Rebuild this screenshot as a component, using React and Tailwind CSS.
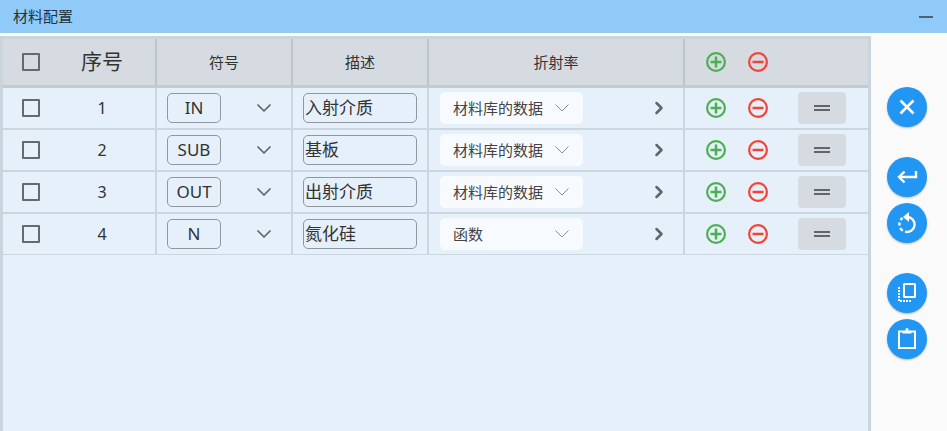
import { ChevronDown, ChevronRight } from 'lucide-react'

const sans = 'font-["Noto_Sans","Noto_Sans_CJK_SC",sans-serif]'

const rows = [
  { id: 1, sym: 'IN', desc: '入射介质', rate: '材料库的数据' },
  { id: 2, sym: 'SUB', desc: '基板', rate: '材料库的数据' },
  { id: 3, sym: 'OUT', desc: '出射介质', rate: '材料库的数据' },
  { id: 4, sym: 'N', desc: '氮化硅', rate: '函数', last: true },
]

function Check() {
  return <div className="w-[18px] h-[18px] shrink-0 border-2 border-[#666a6d] rounded-[1px]" />
}

function AddBtn() {
  return (
    <svg width="20" height="20" viewBox="0 0 20 20" fill="none" stroke="#4caf50" strokeWidth="2.2">
      <circle cx="10" cy="10" r="8.900" />
      <path d="M10 4.500v11M4.500 10h11" strokeWidth="2.500" />
    </svg>
  )
}

function DelBtn() {
  return (
    <svg width="20" height="20" viewBox="0 0 20 20" fill="none" stroke="#f44336" strokeWidth="2.2">
      <circle cx="10" cy="10" r="8.900" />
      <path d="M4.500 10h11" strokeWidth="2.500" />
    </svg>
  )
}

function Fab({ children, className = '' }) {
  return (
    <div className={'w-10 h-10 rounded-full bg-[#2196f3] flex items-center justify-center text-white shadow-[0_1px_2px_rgba(0,0,0,0.25)] ' + className}>
      {children}
    </div>
  )
}

function Row({ row }) {
  return (
    <div className={'flex shrink-0 border-[#cbd6df] text-[#333] ' + (row.last ? 'h-[41px] border-b' : 'h-[42px] border-b-2')}>
      <div className="w-[152px] flex items-center pl-[19px]">
        <Check />
        <div className="w-[66px] ml-[29px] text-center text-[16px]">{row.id}</div>
      </div>
      <div className="w-[136px] border-l-2 border-[#cbd6df] flex items-center pl-[10px]">
        <div className="w-[54px] h-[30px] border border-[#8f979e] rounded-[5px] flex items-center justify-center text-[17px]">{row.sym}</div>
        <ChevronDown size={24} strokeWidth={1.7} className="ml-[31px] text-[#5f666c]" />
      </div>
      <div className="w-[136px] border-l-2 border-[#cbd6df] flex items-center pl-[10px]">
        <div className="w-[114px] h-[30px] border border-[#8f979e] rounded-[5px] flex items-center pl-[1px] text-[17px] whitespace-nowrap overflow-hidden">{row.desc}</div>
      </div>
      <div className="w-[256px] border-l-2 border-[#cbd6df] flex items-center pl-[10px]">
        <div className="w-[143px] h-[32px] ml-px bg-[#f7fbff] rounded-[5px] flex items-center justify-between pl-[13px] pr-[14px] text-[15px] text-[#444]">
          <span>{row.rate}</span>
          <svg width="14" height="8" viewBox="0 0 14 8" fill="none" stroke="#8a9096" strokeWidth="1">
            <path d="M0.500 0.500 7 7l6.500-6.500" />
          </svg>
        </div>
        <ChevronRight size={20} strokeWidth={3} className="ml-[66px] text-[#5f666c]" />
      </div>
      <div className="flex-1 border-l-2 border-[#cbd6df] flex items-center pl-[21px]">
        <AddBtn />
        <div className="ml-[22px] flex"><DelBtn /></div>
        <div className="ml-[30px] w-12 h-8 rounded-[4px] bg-[#d5dbe1] flex flex-col gap-[2px] items-center justify-center">
          <div className="w-4 h-[2px] bg-[#5f666c]" />
          <div className="w-4 h-[2px] bg-[#5f666c]" />
        </div>
      </div>
    </div>
  )
}

export default function App() {
  return (
    <div className={'w-[947px] h-[431px] overflow-hidden bg-[#fafafa] flex flex-col ' + sans}>
      <div className="h-[33px] shrink-0 bg-[#90caf9] flex items-center justify-between pl-[13px] pr-[14px] text-[15px] text-[#263238]">
        <span>材料配置</span>
        <div className="w-[14px] h-[2px] bg-[#4a6377]" />
      </div>
      <div className="h-[3px] shrink-0 bg-white" />
      <div className="flex flex-1 min-h-0">
        <div className="w-[871px] shrink-0 border-[3px] border-b-0 border-[#c9d4dd] bg-[#e5f0fa] flex flex-col">
          <div className="flex h-[49px] shrink-0 bg-[#d5dbe1] border-b-[3px] border-[#c3cad1] text-[#333]">
            <div className="w-[152px] flex items-center pl-[19px]">
              <Check />
              <div className="w-[66px] ml-[29px] text-center text-[21px]">序号</div>
            </div>
            <div className="w-[136px] border-l-2 border-[#bcc4cb] flex items-center justify-center text-[15px]">符号</div>
            <div className="w-[136px] border-l-2 border-[#bcc4cb] flex items-center justify-center text-[15px]">描述</div>
            <div className="w-[256px] border-l-2 border-[#bcc4cb] flex items-center justify-center text-[15px]">折射率</div>
            <div className="flex-1 border-l-2 border-[#bcc4cb] flex items-center pl-[21px]">
              <AddBtn />
              <div className="ml-[22px] flex"><DelBtn /></div>
            </div>
          </div>
          {rows.map((r) => <Row key={r.id} row={r} />)}
        </div>
        <div className="flex-1 flex flex-col items-center pt-[51px] pr-[4px]">
          <Fab>
            <svg width="22" height="22" viewBox="0 0 22 22" fill="none" stroke="currentColor" strokeWidth="2.6">
              <path d="M4.500 4.500l13 13M17.500 4.500l-13 13" />
            </svg>
          </Fab>
          <Fab className="mt-[30px]">
            <svg width="22" height="22" viewBox="0 0 22 22" fill="none" stroke="currentColor" strokeWidth="2.4">
              <path d="M20 5v6H4" />
              <path d="M8.500 5.500 3 11l5.500 5.500" />
            </svg>
          </Fab>
          <Fab className="mt-[6px]">
            <svg width="22" height="22" viewBox="0 0 22 22" fill="none" stroke="currentColor" strokeWidth="2.4">
              <path d="M11 5a7.500 7.500 0 1 1-2 14.700" />
              <path d="M6.800 18.800a7.500 7.500 0 0 1-2.600-2.800M3.600 13.500a7.500 7.500 0 0 1 0-3M4.600 8a7.500 7.500 0 0 1 2-2" />
              <path d="M13 0 7 5l6 5z" fill="currentColor" stroke="none" />
            </svg>
          </Fab>
          <Fab className="mt-[30px]">
            <svg width="22" height="22" viewBox="0 0 22 22" fill="none" stroke="currentColor" strokeWidth="2">
              <rect x="8" y="2" width="11" height="13" rx="0.500" />
              <path d="M3 5v14h13" strokeDasharray="2 1" />
            </svg>
          </Fab>
          <Fab className="mt-[6px]">
            <svg width="22" height="22" viewBox="0 0 22 22" fill="none" stroke="currentColor" strokeWidth="2" className="overflow-visible">
              <path d="M7 3.500H3V20h16V3.500h-4" />
              <path d="M6.500 5.500 7 2.500h2.500V1.500a1.500 1.500 0 0 1 3 0v1H15l.5 3z" fill="currentColor" stroke="none" />
            </svg>
          </Fab>
        </div>
      </div>
    </div>
  )
}
